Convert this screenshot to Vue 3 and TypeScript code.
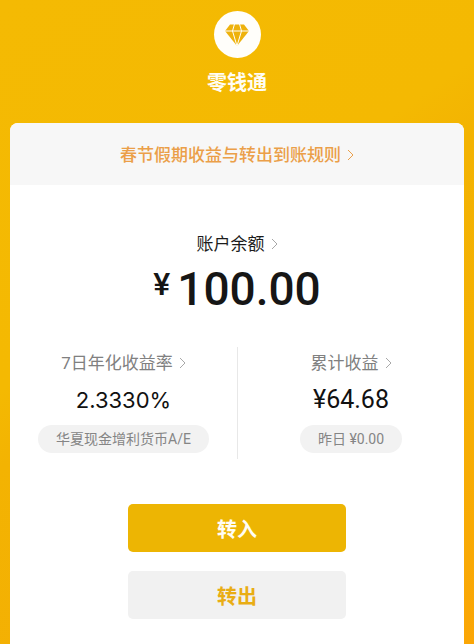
<script setup lang="ts">
interface Stat {
  id: string
  label: string
  value: string
  note: string
}

const stats: Stat[] = [
  { id: 'rate', label: '7日年化收益率', value: '2.3330%', note: '华夏现金增利货币A/E' },
  { id: 'total', label: '累计收益', value: '¥64.68', note: '昨日 ¥0.00' },
]
</script>

<template>
  <div class="page">
    <header class="brand">
      <div class="badge">
        <svg class="gem" viewBox="0 0 24 22" aria-hidden="true">
          <path d="M5 0.500h14L24 7 12 22 0 7z" />
          <path class="facets" d="M0 7h24M9.500 0 7.500 7 12 22l4.500-15L14.500 0" />
        </svg>
      </div>
      <h1 class="title">零钱通</h1>
    </header>

    <main class="card">
      <a class="notice" href="#">
        <span>春节假期收益与转出到账规则</span>
        <svg class="chevron" viewBox="0 0 7 12" aria-hidden="true"><path d="M1 1l5 5-5 5" /></svg>
      </a>

      <section class="balance">
        <a class="label dark" href="#">
          <span>账户余额</span>
          <svg class="chevron" viewBox="0 0 7 12" aria-hidden="true"><path d="M1 1l5 5-5 5" /></svg>
        </a>
        <p class="amount"><span class="currency">¥</span><span>100.00</span></p>
      </section>

      <section class="stats">
        <div v-for="stat in stats" :key="stat.id" class="stat" :class="stat.id">
          <a class="label" href="#">
            <span>{{ stat.label }}</span>
            <svg class="chevron" viewBox="0 0 7 12" aria-hidden="true"><path d="M1 1l5 5-5 5" /></svg>
          </a>
          <p class="value">{{ stat.value }}</p>
          <p class="pill">{{ stat.note }}</p>
        </div>
      </section>

      <div class="actions">
        <button type="button" class="button primary">转入</button>
        <button type="button" class="button">转出</button>
      </div>
    </main>
  </div>
</template>

<style>
body {
  margin: 0;
}
</style>

<style scoped>
.page {
  box-sizing: border-box;
  display: flex;
  flex-direction: column;
  min-height: 100vh;
  padding: 11px 10px 0;
  background: linear-gradient(145deg, #f4ba03 0%, #f4b902 40%, #f3b302 48%, #f4b003 70%, #fba606 100%);
  font-family: Roboto, "Noto Sans CJK SC", sans-serif;
}

.brand {
  display: flex;
  flex-direction: column;
  align-items: center;
  gap: 10px;
}

.badge {
  display: flex;
  align-items: center;
  justify-content: center;
  width: 47px;
  height: 47px;
  border-radius: 50%;
  background: #fffefa;
}

.gem {
  width: 24px;
  height: 22px;
  fill: #eeb20c;
}

.facets {
  fill: none;
  stroke: #fffefa;
  stroke-width: 1;
}

.title {
  margin: 0;
  color: #fffdf5;
  font-size: 20px;
  font-weight: 700;
  line-height: 30px;
}

.card {
  flex: 1;
  margin-top: 25px;
  padding-bottom: 25px;
  border-radius: 8px 8px 0 0;
  background: #fff;
  overflow: hidden;
}

.notice,
.label {
  display: flex;
  align-items: center;
  justify-content: center;
  gap: 6px;
  font-size: 17px;
  line-height: 24px;
  text-decoration: none;
}

.notice {
  padding: 20px 0 18px;
  background: #f7f7f7;
  color: #eb9f49;
  font-weight: 500;
}

.label {
  color: #808080;
}

.dark {
  color: #1c1c1c;
}

.chevron {
  width: 7px;
  height: 12px;
  fill: none;
  stroke: #a8a8a8;
  stroke-width: 1;
}

.notice .chevron {
  stroke: #eb9f49;
}

.balance {
  padding-top: 47px;
}

.amount {
  display: flex;
  align-items: flex-start;
  justify-content: center;
  gap: 7px;
  margin: 5px 0 0;
  color: #161616;
  font-size: 46px;
  font-weight: 500;
  line-height: 56px;
}

.currency {
  font-size: 32px;
  line-height: 46px;
}

.stats {
  display: grid;
  grid-template-columns: 1fr 1fr;
  margin-top: 30px;
}

.stat {
  display: flex;
  flex-direction: column;
  align-items: center;
  padding: 4px 0 6px;
}

.stat + .stat {
  border-left: 1px solid #e8e8e8;
}

.value {
  margin: 8px 0;
  color: #111;
  font-size: 25px;
  line-height: 34px;
}

.rate .value {
  font-family: Inter, sans-serif;
  font-size: 22px;
}

.pill {
  margin: 0;
  padding: 0 18px;
  border-radius: 14px;
  background: #f2f2f2;
  color: #858585;
  font-size: 14px;
  line-height: 28px;
}

.actions {
  display: flex;
  flex-direction: column;
  align-items: center;
  gap: 19px;
  margin-top: 45px;
}

.button {
  width: 48%;
  height: 48px;
  padding: 0;
  border: 0;
  border-radius: 5px;
  background: #f1f1f1;
  color: #e9ad14;
  font-family: inherit;
  font-size: 20px;
  font-weight: 700;
  cursor: pointer;
}

.primary {
  background: #edb503;
  color: #fffdf5;
}
</style>
